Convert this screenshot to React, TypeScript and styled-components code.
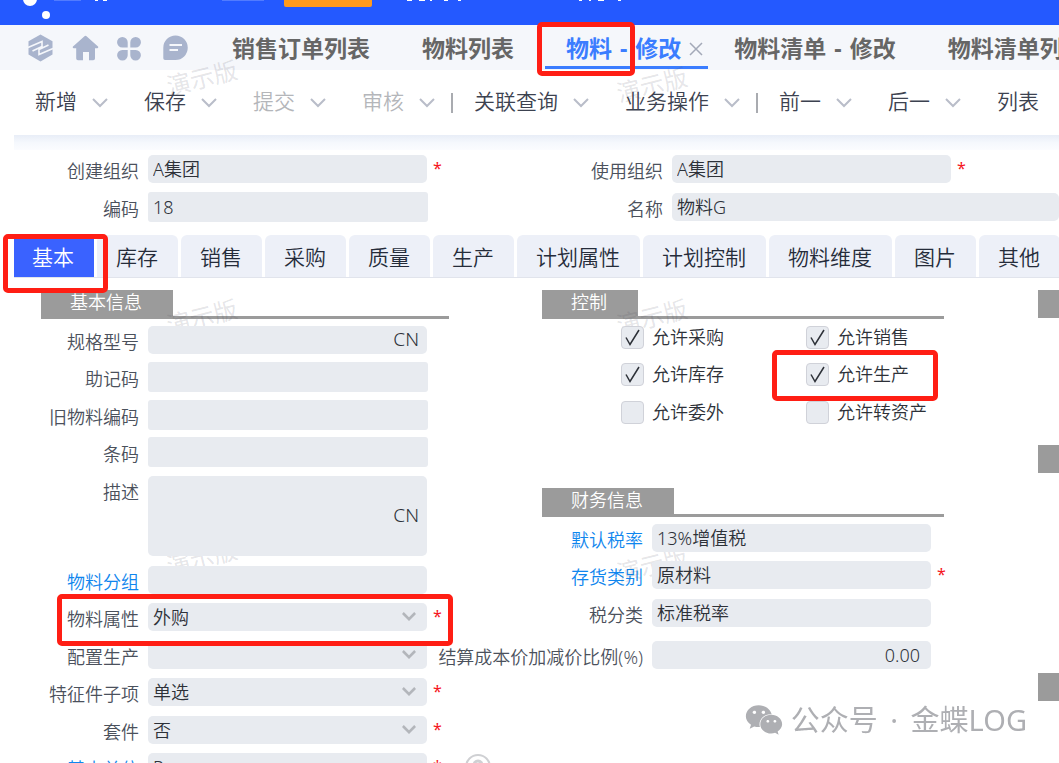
import React, { useId } from 'react';
import styled, { createGlobalStyle, css } from 'styled-components';
import { FaWeixin } from 'react-icons/fa';

const GlobalStyle = createGlobalStyle`
  *, *::before, *::after { box-sizing: border-box; }
  body {
    margin: 0;
    overflow: hidden;
    background: #fff;
    color: #33373d;
    font-family: "Noto Sans", "Noto Sans CJK SC", sans-serif;
    font-weight: 350;
  }
  button, input, select, textarea {
    font: inherit;
    color: inherit;
    border: 0;
    padding: 0;
    margin: 0;
    background: none;
    outline: none;
  }
  a { text-decoration: none; }
`;

const Page = styled.div`
  position: relative;
  isolation: isolate;
  min-height: 100vh;
  overflow: hidden;
`;

/* top strip */

const TopBar = styled.header`
  display: flex;
  height: 25px;
  background: #2459ff;
`;

const BrandMark = styled.svg`
  flex: 1;
  height: 25px;
`;

const tabFont = css`
  font-size: 23px;
  line-height: 43px;
  font-weight: 700;
  white-space: nowrap;
`;

const PageTabs = styled.nav`
  display: flex;
  height: 45px;
  background: #f5f7fb;
`;

const IconGroup = styled.div`
  display: flex;
  flex: none;
  align-items: center;
  gap: 18px;
  width: 206px;
  padding-left: 27px;
`;

const IconButton = styled.button`
  display: flex;
  width: 27px;
  height: 28px;
  color: #a9b4cd;
  cursor: pointer;
`;

const PageTab = styled.div<{ $active?: boolean }>`
  position: relative;
  display: flex;
  flex: none;
  align-items: center;
  gap: 8px;
  padding: ${p => (p.$active ? '0 5px 0 26px' : '0 26px')};

  ${p => p.$active && css`
    &::after {
      content: '';
      position: absolute;
      left: 5px;
      right: 0;
      bottom: 1px;
      height: 3px;
      background: #3b7dff;
    }
  `}
`;

const PageTabLink = styled.a<{ $active?: boolean }>`
  ${tabFont}
  padding-top: 2px;
  color: ${p => (p.$active ? '#3b7dff' : '#666')};
`;

const Dash = styled.span`
  margin: 0 2px;
`;

const CloseButton = styled.button`
  display: flex;
  padding-top: 3px;
  color: #a3a9b8;
`;

/* toolbar */

const Toolbar = styled.div`
  display: flex;
  align-items: center;
  gap: 36px;
  height: 65px;
  padding-left: 35px;
`;

const ToolButton = styled.button<{ $muted?: boolean }>`
  display: flex;
  flex: none;
  align-items: center;
  gap: 15px;
  font-size: 21px;
  line-height: 30px;
  white-space: nowrap;
  color: ${p => (p.$muted ? '#b4b6ba' : '#3c4250')};
`;

const ToolName = styled.span`
  padding-bottom: 3px;
`;

const ToolDivider = styled.span`
  flex: none;
  width: 2px;
  height: 20px;
  margin: 0 -15px 0 -20px;
  background: #a9abb0;
`;

const Shade = styled.div`
  height: 15px;
  margin-left: 14px;
  background: linear-gradient(#e8edf7, #f5f8fd 50%, #fbfcff);
`;

/* forms */

const HeaderForm = styled.form`
  display: grid;
  grid-template-columns: 524fr 535fr;
`;

const Line = styled.div<{ $short?: boolean; $tall?: boolean }>`
  position: relative;
  display: flex;
  align-items: flex-start;
  height: ${p => (p.$tall ? 90 : p.$short ? 37 : 38)}px;
  padding-top: ${p => (p.$short ? 4 : 5)}px;
`;

const Caption = styled.label<{ $width: number; $link?: boolean }>`
  display: flex;
  flex: none;
  justify-content: flex-end;
  width: ${p => p.$width}px;
  margin-right: 9px;
  padding-top: 2px;
  font-size: 18px;
  line-height: 28px;
  white-space: nowrap;
  color: ${p => (p.$link ? '#0f86ee' : '#4b515c')};
`;

const CaptionLink = styled.a`
  color: inherit;
`;

const Box = styled.div<{ $kind: FieldKind }>`
  position: relative;
  z-index: 1;
  display: flex;
  flex: 1;
  align-items: center;
  min-width: 0;
  height: ${p => (p.$kind === 'area' ? 80 : p.$kind === 'plain' ? 30 : 28)}px;
  margin: ${p => (p.$kind === 'plain' ? '-1px -1px -1px 0' : '0')};
  border-radius: ${p => (p.$kind === 'plain' ? 3 : 5)}px;
  background: #e8ebf0;
  font-size: 18px;
  line-height: 28px;
  color: #2d3138;
`;

const TextInput = styled.input<{ $right?: boolean }>`
  flex: 1;
  min-width: 0;
  height: 28px;
  padding: ${p => (p.$right ? '0 11px' : '0 5px')};
  text-align: ${p => (p.$right ? 'right' : 'left')};
`;

const TextArea = styled.textarea`
  flex: 1;
  min-width: 0;
  height: 80px;
  padding: 4px 5px;
  resize: none;
`;

const Select = styled.select`
  flex: 1;
  min-width: 0;
  height: 28px;
  padding: 0 32px 0 5px;
  appearance: none;
`;

const SelectArrow = styled.span`
  position: absolute;
  right: 11px;
  top: 9px;
  display: flex;
  color: #b3b6bb;
  pointer-events: none;
`;

const Suffix = styled.span`
  padding: 0 8px 2px 0;
  font-size: 19px;
  line-height: 26px;
`;

const Slot = styled.span<{ $width: number }>`
  flex: none;
  width: ${p => p.$width}px;
  padding-left: 6px;
  font-size: 16px;
  line-height: 26px;
  font-weight: 400;
  color: #f5141c;
`;

/* category tabs */

const CategoryTabs = styled.div`
  display: flex;
  gap: 3px;
  height: 43px;
  margin: 9px 0 12px 14px;
  border-bottom: 1px solid #e1e4ec;
`;

const CategoryItem = styled.div`
  position: relative;
  display: flex;
  flex: none;
`;

const CategoryTab = styled.button<{ $active?: boolean }>`
  padding: ${p => (p.$active ? '2px 20px 0 18px' : '2px 20px 0 19px')};
  border-radius: ${p => (p.$active ? '0' : '6px 6px 0 0')};
  background: ${p => (p.$active ? '#3a62ff' : '#edf0f8')};
  color: ${p => (p.$active ? '#fff' : '#252c3a')};
  font-size: 21px;
  line-height: 40px;
  white-space: nowrap;
`;

/* sections */

const Columns = styled.div`
  display: grid;
  grid-template-columns: 501fr 496fr 21fr;
  padding-left: 41px;
`;

const Column = styled.div<{ $gutter?: number }>`
  min-width: 0;
  padding-right: ${p => p.$gutter ?? 0}px;
`;

const SectionHead = styled.h2`
  display: flex;
  height: 29px;
  margin: 0 0 2px;
  border-bottom: 3px solid #9b9b9b;
  font-size: 18px;
  line-height: 24px;
  font-weight: 350;
`;

const SectionName = styled.span`
  height: 29px;
  padding: 0 31px 0 29px;
  background: #9b9b9b;
  color: #fff;
  white-space: nowrap;
`;

const NextSection = styled.div<{ $before: number }>`
  height: 28px;
  margin-top: ${p => p.$before}px;
  background: #9b9b9b;
`;

const CheckGrid = styled.div`
  display: grid;
  grid-template-columns: 185px 1fr;
  padding: 0 0 55px 79px;
`;

const CheckLabel = styled.label`
  position: relative;
  display: inline-flex;
  align-items: center;
  gap: 8px;
  font-size: 18px;
  line-height: 24px;
  white-space: nowrap;
  color: #2d3138;
`;

const CheckBoxWrap = styled.span`
  position: relative;
  z-index: 1;
  display: flex;
  width: 23px;
  height: 23px;

  svg {
    position: absolute;
    inset: 0;
    pointer-events: none;
  }
`;

const CheckInput = styled.input`
  appearance: none;
  width: 23px;
  height: 23px;
  border: 1px solid #d0d2d9;
  border-radius: 4px;
  background: #e8ebf0;
`;

/* overlays */

const Callout = styled.span<{ $inset: string }>`
  position: absolute;
  inset: ${p => p.$inset};
  z-index: 3;
  border: 5px solid #ff1e14;
  border-radius: 5px;
  pointer-events: none;
`;

const DemoMark = styled.span<{ $x: number; $y: number }>`
  position: absolute;
  left: ${p => p.$x}px;
  top: ${p => p.$y}px;
  font-size: 24px;
  line-height: 30px;
  font-weight: 400;
  color: rgba(70, 70, 90, 0.15);
  transform: rotate(-14deg);
  pointer-events: none;
`;

const Signature = styled.div`
  position: fixed;
  right: 32px;
  bottom: 23px;
  display: flex;
  align-items: center;
  gap: 8px;
  font-size: 29px;
  line-height: 40px;
  font-weight: 400;
  color: #aeafb3;
  white-space: nowrap;
`;

const Dot = styled.span`
  margin: 0 5px;
`;

const HelpRing = styled.svg`
  position: absolute;
  left: 424px;
  top: 5px;
`;

const Chevron = ({ width = 16, color = '#b9bdc9', stroke = 2 }) => (
  <svg width={width} height={width === 16 ? 10 : 9} viewBox="0 0 16 10" fill="none" stroke={color} strokeWidth={stroke}>
    <path d="M1 1l7 7 7-7" />
  </svg>
);

const HexIcon = () => (
  <svg width="27" height="28" viewBox="0 0 27 28">
    <path d="M13.500 0.500L25.500 7.200V20.500L13.500 27.500L1.500 20.500V7.200z" fill="currentColor" />
    <path d="M1 13.500L15 7.500V12.500L5.500 17M26 14.500L12 20.500V15.500L21.500 11" fill="none" stroke="#f5f7fb" strokeWidth="1.600" />
  </svg>
);

const HomeIcon = () => (
  <svg width="27" height="28" viewBox="0 0 27 28" fill="currentColor">
    <path d="M12.200 2.400a2 2 0 0 1 2.600 0L26 12.600c.6.700.2 1.700-.7 1.700H23V24.500a1.800 1.800 0 0 1-1.800 1.800H17V18h-6v8.300H6a1.800 1.800 0 0 1-1.800-1.800V14.300H1.700c-.9 0-1.300-1-.7-1.700z" />
  </svg>
);

const AppsIcon = () => (
  <svg width="27" height="28" viewBox="0 0 27 28" fill="currentColor">
    <path d="M5.300 3A5.300 5.300 0 0 1 10.700 8.300V13.500H5.300a5.250 5.250 0 0 1 0-10.500zM18.700 3a5.250 5.250 0 0 1 0 10.500h-5.400V8.300A5.300 5.300 0 0 1 18.700 3zM5.300 16h5.400v5.300A5.300 5.300 0 1 1 5.300 16zM13.300 16h5.400a5.300 5.300 0 1 1-5.400 5.300z" />
  </svg>
);

const MessageIcon = () => (
  <svg width="27" height="28" viewBox="0 0 27 28">
    <path d="M13.500 1.500a12.200 12.200 0 0 1 0 24.500H3a1.700 1.700 0 0 1-1.700-1.700V13.700A12.200 12.200 0 0 1 13.500 1.500z" fill="currentColor" />
    <path d="M7.500 11h12.500M7.500 16h8.500" stroke="#f5f7fb" strokeWidth="1.800" />
  </svg>
);

type FieldKind = 'lookup' | 'plain' | 'area' | 'select';

interface FieldProps {
  label: string;
  value?: string;
  kind?: FieldKind;
  labelWidth: number;
  link?: boolean;
  required?: boolean;
  suffix?: string;
  slot: number;
  short?: boolean;
  right?: boolean;
  children?: React.ReactNode;
}

const Field = ({ label, value = '', kind = 'lookup', labelWidth, link, required, suffix, slot, short, right, children }: FieldProps) => {
  const id = useId();
  return (
    <Line $short={short} $tall={kind === 'area'}>
      <Caption htmlFor={id} $width={labelWidth} $link={link}>
        {link ? <CaptionLink href="#">{label}</CaptionLink> : label}
      </Caption>
      <Box $kind={kind}>
        {kind === 'area' && <TextArea id={id} defaultValue={value} />}
        {kind === 'select' && (
          <Select id={id} defaultValue={value}>
            <option>{value}</option>
          </Select>
        )}
        {(kind === 'lookup' || kind === 'plain') && <TextInput id={id} defaultValue={value} $right={right} />}
        {kind === 'select' && <SelectArrow><Chevron width={14} color="#b3b6bb" stroke={3} /></SelectArrow>}
        {suffix && <Suffix>{suffix}</Suffix>}
      </Box>
      {slot > 0 && <Slot $width={slot}>{required ? '*' : ''}</Slot>}
      {children}
    </Line>
  );
};

const Check = ({ label, checked, marked, short }: { label: string; checked?: boolean; marked?: boolean; short?: boolean }) => (
  <Line $short={short}>
    <CheckLabel>
      <CheckBoxWrap>
        <CheckInput type="checkbox" defaultChecked={checked} />
        {checked && (
          <svg viewBox="0 0 23 23" fill="none" stroke="#2d3138" strokeWidth="1.500">
            <path d="M5 11.500l4 7L18 4" />
          </svg>
        )}
      </CheckBoxWrap>
      {label}
      {marked && <Callout $inset="-12px -29px -15px -34px" />}
    </CheckLabel>
  </Line>
);

const tools = [
  { name: '新增', menu: true },
  { name: '保存', menu: true },
  { name: '提交', menu: true, muted: true },
  { name: '审核', menu: true, muted: true, divider: true },
  { name: '关联查询', menu: true },
  { name: '业务操作', menu: true, divider: true },
  { name: '前一', menu: true },
  { name: '后一', menu: true },
  { name: '列表' },
];

const categories = ['基本', '库存', '销售', '采购', '质量', '生产', '计划属性', '计划控制', '物料维度', '图片', '其他'];

const checks = [
  { label: '允许采购', checked: true },
  { label: '允许销售', checked: true },
  { label: '允许库存', checked: true },
  { label: '允许生产', checked: true, marked: true },
  { label: '允许委外' },
  { label: '允许转资产' },
];

const demoMarks = [
  [166, 63], [616, 70], [166, 302], [616, 302], [166, 543], [616, 550],
];

export default function App() {
  return (
    <Page>
      <GlobalStyle />
      <TopBar>
        <BrandMark>
          <circle cx="30" cy="-1" r="7" fill="#fff" />
          <circle cx="46" cy="15" r="4" fill="#fff" />
          <path d="M54 0h27M222 0h42" stroke="#7f9eff" strokeWidth="1" />
          <path d="M95 0h3M103 0h4M407 0h5M419 0h6M430 0h2M444 0h4M458 0h3M579 0h3M589 0h2M598 0h6M618 0h3" stroke="#fff" strokeWidth="2" />
          <path d="M284 0h88v5a2 2 0 0 1-2 2h-84a2 2 0 0 1-2-2z" fill="#ff9a1e" />
        </BrandMark>
      </TopBar>

      <PageTabs>
        <IconGroup>
          <IconButton aria-label="工作台"><HexIcon /></IconButton>
          <IconButton aria-label="首页"><HomeIcon /></IconButton>
          <IconButton aria-label="应用"><AppsIcon /></IconButton>
          <IconButton aria-label="消息"><MessageIcon /></IconButton>
        </IconGroup>
        <PageTab><PageTabLink href="#">销售订单列表</PageTabLink></PageTab>
        <PageTab><PageTabLink href="#">物料列表</PageTabLink></PageTab>
        <PageTab $active>
          <PageTabLink href="#" $active>物料 <Dash>-</Dash> 修改</PageTabLink>
          <CloseButton aria-label="关闭">
            <svg width="14" height="14" viewBox="0 0 14 14" stroke="currentColor" strokeWidth="1.500">
              <path d="M1 1l12 12M13 1L1 13" />
            </svg>
          </CloseButton>
          <Callout $inset="-3px 73px -6px -3px" />
        </PageTab>
        <PageTab><PageTabLink href="#">物料清单 <Dash>-</Dash> 修改</PageTabLink></PageTab>
        <PageTab><PageTabLink href="#">物料清单列表</PageTabLink></PageTab>
      </PageTabs>

      <Toolbar>
        {tools.map(t => (
          <React.Fragment key={t.name}>
            <ToolButton $muted={t.muted} disabled={t.muted}>
              <ToolName>{t.name}</ToolName>
              {t.menu && <Chevron />}
            </ToolButton>
            {t.divider && <ToolDivider />}
          </React.Fragment>
        ))}
      </Toolbar>
      <Shade />

      <HeaderForm>
        <Field label="创建组织" value="A集团" labelWidth={139} required slot={97} />
        <Field label="使用组织" value="A集团" labelWidth={139} required slot={108} />
        <Field label="编码" value="18" kind="plain" labelWidth={139} slot={97} />
        <Field label="名称" value="物料G" labelWidth={139} slot={0} />
      </HeaderForm>

      <CategoryTabs>
        {categories.map((name, i) => (
          <CategoryItem key={name}>
            <CategoryTab $active={i === 0}>{name}</CategoryTab>
            {i === 0 && <Callout $inset="-1px -14px -16px -11px" />}
          </CategoryItem>
        ))}
      </CategoryTabs>

      <Columns>
        <Column $gutter={93}>
          <SectionHead><SectionName>基本信息</SectionName></SectionHead>
          <Field label="规格型号" suffix="CN" labelWidth={98} slot={22} />
          <Field label="助记码" kind="plain" labelWidth={98} slot={22} short />
          <Field label="旧物料编码" kind="plain" labelWidth={98} slot={22} />
          <Field label="条码" kind="plain" labelWidth={98} slot={22} short />
          <Field label="描述" kind="area" suffix="CN" labelWidth={98} slot={22} />
          <Field label="物料分组" link labelWidth={98} slot={22} />
          <Field label="物料属性" value="外购" kind="select" required labelWidth={98} slot={22} short>
            <Callout $inset="-5px -4px -10px 16px" />
          </Field>
          <Field label="配置生产" kind="select" labelWidth={98} slot={22} />
          <Field label="特征件子项" value="单选" kind="select" required labelWidth={98} slot={22} short />
          <Field label="套件" value="否" kind="select" required labelWidth={98} slot={22} />
          <Field label="基本单位" value="Pcs" link required labelWidth={98} slot={22} short>
            <HelpRing width="26" height="26" viewBox="0 0 26 26" fill="none" stroke="#cfd0d3">
              <circle cx="13" cy="13" r="12" strokeWidth="2" />
              <path d="M9 11a4 4 0 1 1 6 3.500c-1.500.9-2 1.500-2 3" strokeWidth="3" />
            </HelpRing>
          </Field>
        </Column>

        <Column $gutter={94}>
          <SectionHead><SectionName>控制</SectionName></SectionHead>
          <CheckGrid>
            {checks.map((c, i) => <Check key={c.label} {...c} short={i < 4} />)}
          </CheckGrid>
          <SectionHead><SectionName>财务信息</SectionName></SectionHead>
          <Field label="默认税率" value="13%增值税" link labelWidth={101} slot={13} />
          <Field label="存货类别" value="原材料" link required labelWidth={101} slot={13} short />
          <Field label="税分类" value="标准税率" labelWidth={101} slot={13} />
          <NextRow>
            <Field label="结算成本价加减价比例(%)" value="0.00" right labelWidth={101} slot={13} />
          </NextRow>
        </Column>

        <Column>
          <NextSection $before={0} />
          <NextSection $before={127} />
          <NextSection $before={200} />
        </Column>
      </Columns>

      {demoMarks.map(([x, y]) => <DemoMark key={`${x}-${y}`} $x={x} $y={y}>演示版</DemoMark>)}

      <Signature>
        <FaWeixin size={38} />
        <span>公众号 <Dot>·</Dot> 金蝶LOG</span>
      </Signature>
    </Page>
  );
}

const NextRow = styled.div`
  padding-top: 4px;
`;
